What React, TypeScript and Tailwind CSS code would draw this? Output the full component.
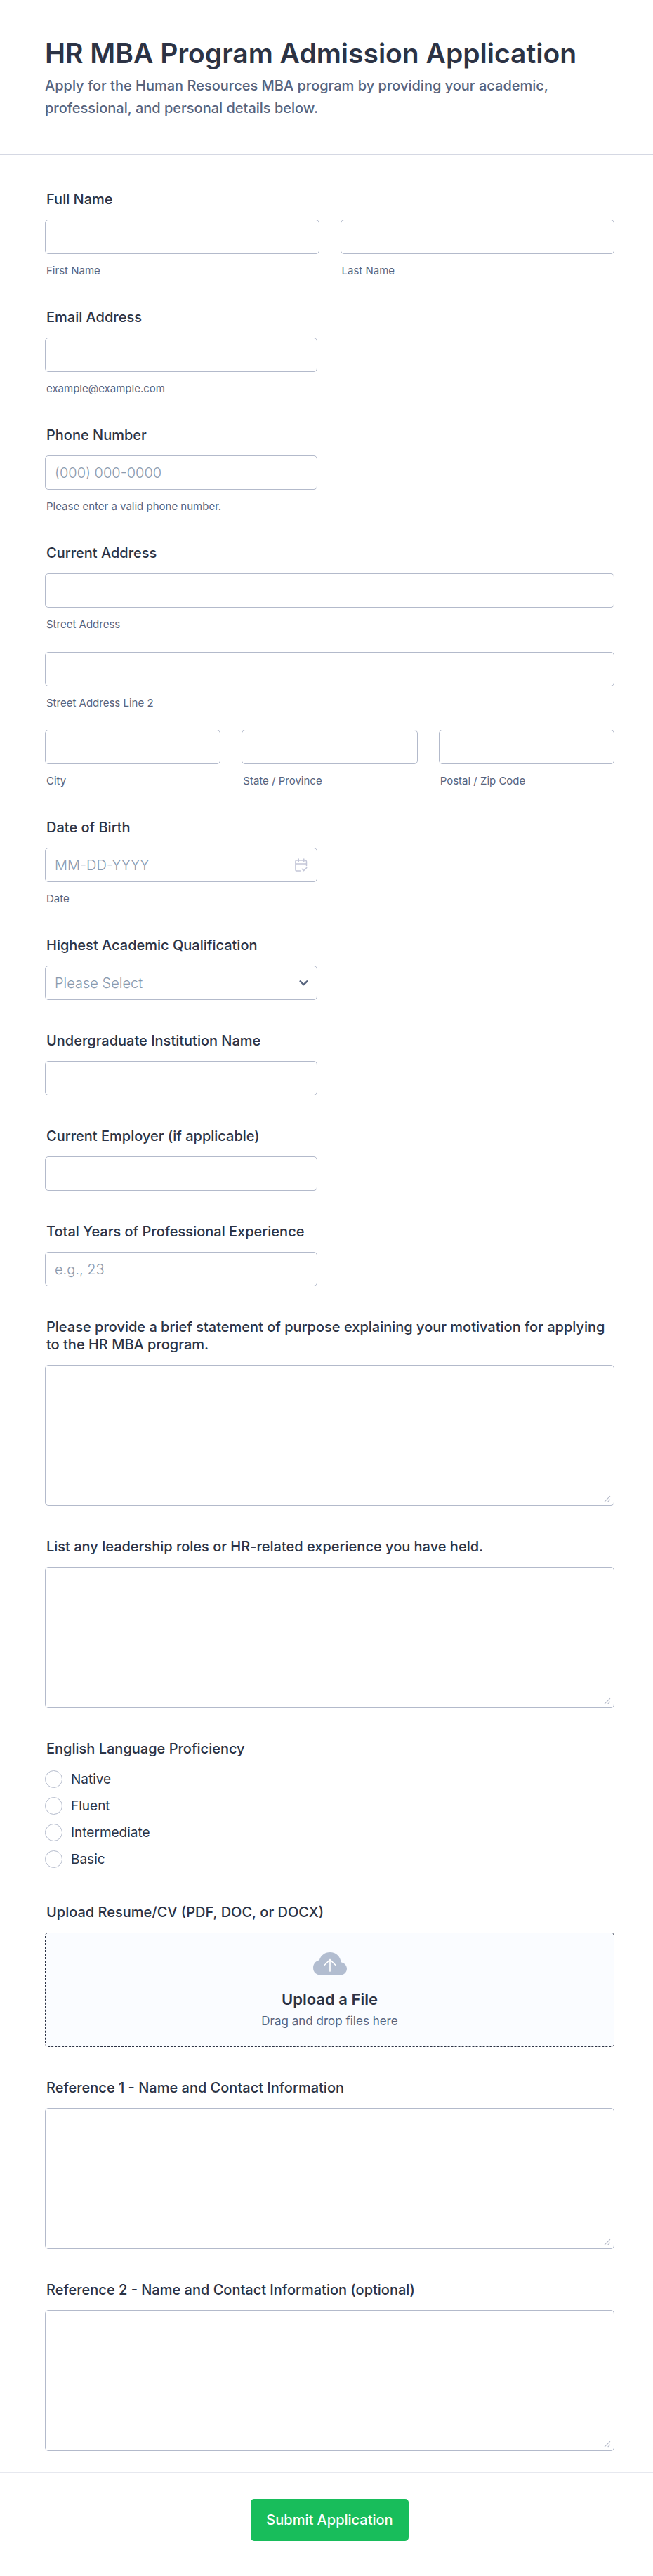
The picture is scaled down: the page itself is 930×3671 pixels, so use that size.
import type { ReactNode } from "react";

const inputClass =
  "block h-[49px] w-full rounded-[5px] border border-[#b3bacb] bg-white px-[13px] text-[20px] font-light text-[#2c3345] placeholder:text-[#8a9aae] placeholder:opacity-100 outline-none focus:border-[#2e69ff]";
const labelClass = "block pl-[2px] text-[20px] leading-[25px] font-medium text-[#2c3345]";

function Field({ label, htmlFor, children }: { label: string; htmlFor: string; children: ReactNode }) {
  return (
    <div>
      <label htmlFor={htmlFor} className={labelClass}>
        {label}
      </label>
      <div className="mt-4">{children}</div>
    </div>
  );
}

function Group({ label, children }: { label: string; children: ReactNode }) {
  return (
    <fieldset>
      <legend className={labelClass}>{label}</legend>
      <div className="mt-4">{children}</div>
    </fieldset>
  );
}

function SubLabel({ htmlFor, children }: { htmlFor: string; children: ReactNode }) {
  return (
    <label htmlFor={htmlFor} className="mt-[15px] block pl-[2px] text-[15px] leading-[17px] text-[#57647e]">
      {children}
    </label>
  );
}

function SubInput({ id, label }: { id: string; label: string }) {
  return (
    <div>
      <input id={id} name={id} type="text" className={inputClass} />
      <SubLabel htmlFor={id}>{label}</SubLabel>
    </div>
  );
}

function TextArea({ id }: { id: string }) {
  return (
    <div className="relative">
      <textarea
        id={id}
        name={id}
        className="block h-[201px] w-full resize-none rounded-[5px] border border-[#b3bacb] bg-white px-[13px] py-3 text-[20px] font-light text-[#2c3345] outline-none"
      />
      <svg
        className="pointer-events-none absolute right-[5px] bottom-[5px] size-[10px]"
        viewBox="0 0 10 10"
        fill="none"
        stroke="#b4b9c8"
        strokeWidth="1.1"
        aria-hidden="true"
      >
        <path d="M1 9.200 9 1.200M5.700 9.200 9 5.900" />
      </svg>
    </div>
  );
}

const levels = ["Native", "Fluent", "Intermediate", "Basic"];

export default function App() {
  return (
    <form className="bg-white font-['Inter',sans-serif] text-[#2c3345]">
      <header className="border-b border-[#d5d8e3] pt-[52px] pr-[55px] pb-[50px] pl-16">
        <h1 className="text-[39px] leading-[48px] font-semibold">HR MBA Program Admission Application</h1>
        <p className="mt-[6px] max-w-[740px] text-[20px] leading-[32px] font-medium text-[#57647e]">
          Apply for the Human Resources MBA program by providing your academic, professional, and personal details
          below.
        </p>
      </header>

      <main className="flex flex-col gap-[46px] pt-[51px] pr-[55px] pb-[30px] pl-16">
        <Group label="Full Name">
          <div className="grid grid-cols-2 gap-[30px]">
            <SubInput id="first-name" label="First Name" />
            <SubInput id="last-name" label="Last Name" />
          </div>
        </Group>

        <Field label="Email Address" htmlFor="email">
          <div className="max-w-[388px]">
            <input id="email" name="email" type="email" className={inputClass} />
            <SubLabel htmlFor="email">example@example.com</SubLabel>
          </div>
        </Field>

        <Field label="Phone Number" htmlFor="phone">
          <div className="max-w-[388px]">
            <input id="phone" name="phone" type="tel" placeholder="(000) 000-0000" className={inputClass} />
            <SubLabel htmlFor="phone">Please enter a valid phone number.</SubLabel>
          </div>
        </Field>

        <Group label="Current Address">
          <div className="flex flex-col gap-[31px]">
            <SubInput id="street" label="Street Address" />
            <SubInput id="street-2" label="Street Address Line 2" />
          </div>
          <div className="mt-[30px] grid grid-cols-3 gap-[30px]">
            <SubInput id="city" label="City" />
            <SubInput id="state" label="State / Province" />
            <SubInput id="postal" label="Postal / Zip Code" />
          </div>
        </Group>

        <Field label="Date of Birth" htmlFor="dob">
          <div className="max-w-[388px]">
            <div className="relative">
              <input id="dob" name="dob" type="text" placeholder="MM-DD-YYYY" className={inputClass} />
              <svg
                className="pointer-events-none absolute top-[14px] right-[14px] size-5"
                viewBox="0 0 20 20"
                fill="none"
                stroke="#c3c6d8"
                strokeWidth="1.5"
                strokeLinecap="round"
                strokeLinejoin="round"
                aria-hidden="true"
              >
                <path d="M9.500 19H4.700a1.800 1.800 0 0 1-1.800-1.800V5.900a1.800 1.800 0 0 1 1.800-1.800h12a1.800 1.800 0 0 1 1.800 1.800V11.500M3 9h15.500M7.200 2v4M14.800 2v4M12.200 16.300l2.300 2.300 4.200-4" />
              </svg>
            </div>
            <SubLabel htmlFor="dob">Date</SubLabel>
          </div>
        </Field>

        <Field label="Highest Academic Qualification" htmlFor="qualification">
          <div className="relative max-w-[388px]">
            <select
              id="qualification"
              name="qualification"
              defaultValue=""
              className="block h-[49px] w-full appearance-none rounded-[5px] border border-[#b3bacb] bg-white px-[13px] text-[20px] font-light text-[#8a9aae] outline-none"
            >
              <option value="">Please Select</option>
            </select>
            <svg
              className="pointer-events-none absolute top-[20px] right-[13px] h-[10px] w-[13px]"
              viewBox="0 0 13 10"
              fill="none"
              stroke="#57647e"
              strokeWidth="2.500"
              strokeLinecap="round"
              strokeLinejoin="round"
              aria-hidden="true"
            >
              <path d="M1.700 2.400 6.500 7.200 11.300 2.400" />
            </svg>
          </div>
        </Field>

        <Field label="Undergraduate Institution Name" htmlFor="institution">
          <div className="max-w-[388px]">
            <input id="institution" name="institution" type="text" className={inputClass} />
          </div>
        </Field>

        <Field label="Current Employer (if applicable)" htmlFor="employer">
          <div className="max-w-[388px]">
            <input id="employer" name="employer" type="text" className={inputClass} />
          </div>
        </Field>

        <Field label="Total Years of Professional Experience" htmlFor="years">
          <div className="max-w-[388px]">
            <input id="years" name="years" type="text" inputMode="numeric" placeholder="e.g., 23" className={inputClass} />
          </div>
        </Field>

        <Field
          label="Please provide a brief statement of purpose explaining your motivation for applying to the HR MBA program."
          htmlFor="statement"
        >
          <TextArea id="statement" />
        </Field>

        <Field label="List any leadership roles or HR-related experience you have held." htmlFor="leadership">
          <TextArea id="leadership" />
        </Field>

        <Group label="English Language Proficiency">
          <div className="flex flex-col gap-[13px] pt-[2px] pb-[5px]">
            {levels.map((level) => (
              <label key={level} className="flex items-center gap-3 text-[19px] leading-[25px]">
                <input
                  type="radio"
                  name="proficiency"
                  value={level}
                  className="size-[25px] shrink-0 appearance-none rounded-full border border-[#b3bacb] bg-white checked:border-[7px] checked:border-[#2e69ff]"
                />
                {level}
              </label>
            ))}
          </div>
        </Group>

        <Field label="Upload Resume/CV (PDF, DOC, or DOCX)" htmlFor="resume">
          <label
            htmlFor="resume"
            className="relative flex h-[163px] cursor-pointer flex-col items-center rounded-[5px] border border-dashed border-[#2c3345] bg-[#fafcff] pt-[27px]"
          >
            <svg className="h-[33px] w-12" viewBox="0 0 48 33" fill="none" aria-hidden="true">
              <path
                d="M10.500 32.500C4.500 32.500 0 28.200 0 22.200 0 16.700 3.700 12.300 8.800 11.500 10.700 4.700 16.700 0 24 0c8.300 0 15 6 15.500 14.200 4.900.8 8.500 4.600 8.500 9.200 0 5.100-4.100 9.100-9.500 9.100Z"
                fill="#b2bdd0"
              />
              <path d="M24 27V10.500M16 18.500l8-8 8 8" stroke="#fff" strokeWidth="1.700" strokeLinecap="round" strokeLinejoin="round" />
            </svg>
            <span className="mt-[21px] text-[22px] leading-[27px] font-semibold">Upload a File</span>
            <span className="mt-[6px] text-[17px] leading-[22px] text-[#57647e]">Drag and drop files here</span>
            <input id="resume" name="resume" type="file" className="sr-only" />
          </label>
        </Field>

        <Field label="Reference 1 - Name and Contact Information" htmlFor="reference-1">
          <TextArea id="reference-1" />
        </Field>

        <Field label="Reference 2 - Name and Contact Information (optional)" htmlFor="reference-2">
          <TextArea id="reference-2" />
        </Field>
      </main>

      <footer className="flex justify-center border-t border-[#e6e8ef] pt-[37px] pr-[55px] pb-[50px] pl-16">
        <button type="submit" className="h-[60px] rounded-[5px] bg-[#18bd5b] px-[22px] text-[20px] font-medium text-white">
          Submit Application
        </button>
      </footer>
    </form>
  );
}
